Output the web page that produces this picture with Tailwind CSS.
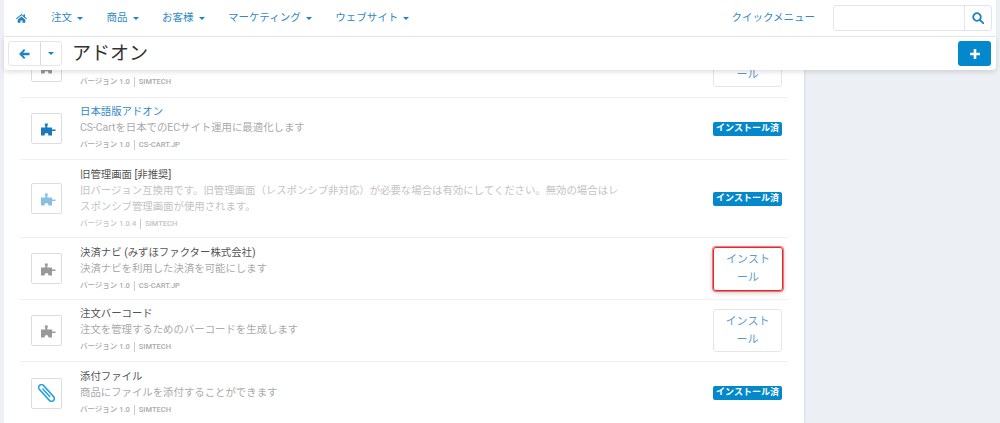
<!DOCTYPE html>
<html lang="ja">
<head>
  <meta charset="UTF-8" />
  <script src="https://cdn.jsdelivr.net/npm/@tailwindcss/browser@4"></script>
  <title>アドオン</title>
</head>
<body class="h-[423px] overflow-hidden bg-[#ecf0f4] font-['Roboto','Noto_Sans_CJK_JP',sans-serif]">
  <svg class="hidden">
    <symbol id="puzzle" viewBox="0 0 20 16">
      <path d="M7.800 2.500h3v1.800l-.5.500V6.500h4.700v2h3.500V10H15v4.500h-3.700v-1.200l-.6-1H8.300l-.6 1v1.200H4V6.500h4.300V4.800l-.5-.5z" fill="currentColor"/>
    </symbol>
  </svg>

  <!-- top bars lie over the scrolled list -->
  <header class="absolute left-[4px] top-0 z-20 w-[992px]">
    <nav class="flex h-[37px] items-center border-b border-[#e8ebee] bg-white pl-[12px] pr-[4px] text-[10.500px] text-[#2f8ac6]">
      <svg class="h-[10px] w-[11px]" viewBox="0 0 16 14"><path d="M8 1 0 7.800l1 1.100L8 3l7 5.900 1-1.100-3-2.500V1.500h-2v2.100zM2.500 9.500V14h4v-3.500h3V14h4V9.500L8 4.800z" fill="#1b82c4"/></svg>
      <ul class="ml-[24px] flex gap-[23.500px]">
        <li class="flex items-center gap-[5px]">注文 <i class="h-0 w-0 border-x-[3px] border-t-[3px] border-x-transparent border-t-[#1b82c4]"></i></li>
        <li class="flex items-center gap-[5px]">商品 <i class="h-0 w-0 border-x-[3px] border-t-[3px] border-x-transparent border-t-[#1b82c4]"></i></li>
        <li class="flex items-center gap-[5px]">お客様 <i class="h-0 w-0 border-x-[3px] border-t-[3px] border-x-transparent border-t-[#1b82c4]"></i></li>
        <li class="flex items-center gap-[5px]">マーケティング <i class="h-0 w-0 border-x-[3px] border-t-[3px] border-x-transparent border-t-[#1b82c4]"></i></li>
        <li class="flex items-center gap-[5px]">ウェブサイト <i class="h-0 w-0 border-x-[3px] border-t-[3px] border-x-transparent border-t-[#1b82c4]"></i></li>
      </ul>
      <span class="ml-auto mr-[18px]">クイックメニュー</span>
      <div class="flex h-[26px] w-[159px] rounded-[3px] border border-[#e2e6ea]">
        <div class="flex-1"></div>
        <div class="flex w-[27px] items-center justify-center border-l border-[#e2e6ea]">
          <svg class="h-[12px] w-[12px]" viewBox="0 0 12 12" fill="none" stroke="#1b82c4" stroke-width="1.800"><circle cx="5" cy="5" r="3.800"/><path d="m8 8 3.200 3.200" stroke-linecap="round"/></svg>
        </div>
      </div>
    </nav>
    <div class="flex h-[33px] items-center justify-between rounded-b-[4px] bg-white pl-[4px] pr-[5px] shadow-[0_2px_5px_rgba(0,0,0,0.13)]">
      <div class="flex items-center">
        <div class="flex h-[25px] w-[54px] rounded-[3px] border border-[#e2e6ea]">
          <div class="flex w-[32px] items-center justify-center border-r border-[#d5dade]">
            <svg class="h-[10px] w-[11px]" viewBox="0 0 11 10"><path d="M5 0 0 5l5 5 1.300-1.300L4 6.300h6.500V3.700H4l2.300-2.400z" fill="#1b82c4"/></svg>
          </div>
          <div class="flex flex-1 items-center justify-center"><i class="h-0 w-0 border-x-[3px] border-t-[3px] border-x-transparent border-t-[#1b82c4]"></i></div>
        </div>
        <h1 class="ml-[10px] text-[19px] leading-none text-[#333]">アドオン</h1>
      </div>
      <div class="flex h-[25px] w-[33px] items-center justify-center rounded-[3px] bg-[#0388cc]">
        <svg class="h-[10px] w-[10px]" viewBox="0 0 10 10"><path d="M3.700 0h2.600v3.700H10v2.600H6.300V10H3.700V6.300H0V3.700h3.700z" fill="#fff"/></svg>
      </div>
    </div>
  </header>

  <main class="ml-[4px] h-[423px] w-[800px] overflow-hidden bg-white px-[16px] pt-[36px] shadow-[1px_0_2px_rgba(0,0,0,0.08)]">
    <div class="flex h-[62px] items-center border-b border-[#eef0f2]">
      <div class="ml-[11px] flex h-[31px] w-[31px] items-center justify-center rounded-[2px] border border-[#ddd] text-[#999]"><svg class="h-[16px] w-[20px]"><use href="#puzzle"/></svg></div>
      <div class="ml-[18px] flex-1"><p class="mt-[30px] text-[7.500px] font-medium text-[#aaa]">バージョン 1.0<span class="mx-[4px] inline-block h-[10px] border-l border-[#ccc] align-middle"></span>SIMTECH</p></div>
      <div class="mr-[6px] flex h-[51px] w-[69px] flex-col items-center justify-end self-start rounded-[3px] border border-[#e2e6ea] pb-[3px] text-[11px] text-[#5b9bd5]">ール</div>
    </div>

    <div class="flex h-[62px] items-center border-b border-[#eef0f2]">
      <div class="ml-[11px] flex h-[31px] w-[31px] items-center justify-center rounded-[2px] border border-[#ddd] text-[#1b78bd]"><svg class="h-[16px] w-[20px]"><use href="#puzzle"/></svg></div>
      <div class="ml-[18px] flex-1 pb-[2px]">
        <h3 class="text-[10.400px] leading-[16px] text-[#2f8ac6]">日本語版アドオン</h3>
        <p class="text-[10.400px] leading-[16px] text-[#aaa]">CS-Cartを日本でのECサイト運用に最適化します</p>
        <p class="mt-[2px] text-[7.500px] leading-[13px] font-medium text-[#aaa]">バージョン 1.0<span class="mx-[4px] inline-block h-[10px] border-l border-[#ccc] align-middle"></span>CS-CART.JP</p>
      </div>
      <span class="mr-[6px] flex h-[14px] w-[69px] items-center justify-center whitespace-nowrap rounded-[2px] bg-[#0388cc] text-[9px] font-bold text-white">インストール済</span>
    </div>

    <div class="flex h-[78px] items-center border-b border-[#eef0f2]">
      <div class="ml-[11px] flex h-[31px] w-[31px] items-center justify-center rounded-[2px] border border-[#ddd] text-[#89bfe3]"><svg class="h-[16px] w-[20px]"><use href="#puzzle"/></svg></div>
      <div class="ml-[18px] w-[548px]">
        <h3 class="text-[10.400px] leading-[16px] text-[#555]">旧管理画面 [非推奨]</h3>
        <p class="text-[10.400px] leading-[16px] text-[#c4c4c4]">旧バージョン互換用です。旧管理画面（レスポンシブ非対応）が必要な場合は有効にしてください。無効の場合はレスポンシブ管理画面が使用されます。</p>
        <p class="mt-[2px] text-[7.500px] leading-[13px] font-medium text-[#c4c4c4]">バージョン 1.0.4<span class="mx-[4px] inline-block h-[10px] border-l border-[#ccc] align-middle"></span>SIMTECH</p>
      </div>
      <span class="ml-auto mr-[6px] flex h-[14px] w-[69px] items-center justify-center whitespace-nowrap rounded-[2px] bg-[#0388cc] text-[9px] font-bold text-white">インストール済</span>
    </div>

    <div class="flex h-[62px] items-center border-b border-[#eef0f2]">
      <div class="ml-[11px] flex h-[31px] w-[31px] items-center justify-center rounded-[2px] border border-[#ddd] text-[#999]"><svg class="h-[16px] w-[20px]"><use href="#puzzle"/></svg></div>
      <div class="ml-[18px] flex-1">
        <h3 class="text-[10.400px] leading-[16px] text-[#555]">決済ナビ (みずほファクター株式会社)</h3>
        <p class="text-[10.400px] leading-[16px] text-[#aaa]">決済ナビを利用した決済を可能にします</p>
        <p class="mt-[2px] text-[7.500px] leading-[13px] font-medium text-[#aaa]">バージョン 1.0<span class="mx-[4px] inline-block h-[10px] border-l border-[#ccc] align-middle"></span>CS-CART.JP</p>
      </div>
      <div class="mr-[5px] flex h-[44px] w-[70px] items-center justify-center rounded-[3px] border border-[#f0242c] text-center text-[11px] leading-[18px] text-[#5b9bd5] shadow-[0_0_0_1px_rgba(240,36,44,0.55),0_1px_5px_rgba(0,0,0,0.3)]">インスト<br>ール</div>
    </div>

    <div class="flex h-[62px] items-center border-b border-[#eef0f2]">
      <div class="ml-[11px] flex h-[31px] w-[31px] items-center justify-center rounded-[2px] border border-[#ddd] text-[#999]"><svg class="h-[16px] w-[20px]"><use href="#puzzle"/></svg></div>
      <div class="ml-[18px] flex-1 pb-[2px]">
        <h3 class="text-[10.400px] leading-[16px] text-[#555]">注文バーコード</h3>
        <p class="text-[10.400px] leading-[16px] text-[#aaa]">注文を管理するためのバーコードを生成します</p>
        <p class="mt-[2px] text-[7.500px] leading-[13px] font-medium text-[#aaa]">バージョン 1.0<span class="mx-[4px] inline-block h-[10px] border-l border-[#ccc] align-middle"></span>SIMTECH</p>
      </div>
      <div class="mr-[6px] flex h-[43px] w-[69px] items-center justify-center rounded-[3px] border border-[#e2e6ea] text-center text-[11px] leading-[18px] text-[#5b9bd5]">インスト<br>ール</div>
    </div>

    <div class="flex h-[62px] items-center">
      <div class="ml-[11px] flex h-[31px] w-[31px] items-center justify-center rounded-[2px] border border-[#ddd]">
        <svg class="h-[18px] w-[18px]" viewBox="0 0 18 18" fill="none" stroke="#2ba5dc" stroke-width="1.600" stroke-linecap="round"><path d="M4.900 5 11.700 12.500M5.600 1.600 15.600 12.600A2.800 2.800 0 0 1 11.400 16.400L1.400 5.400A2.800 2.800 0 0 1 5.600 1.600Z"/></svg>
      </div>
      <div class="ml-[18px] flex-1 pb-[2px]">
        <h3 class="text-[10.400px] leading-[16px] text-[#555]">添付ファイル</h3>
        <p class="text-[10.400px] leading-[16px] text-[#aaa]">商品にファイルを添付することができます</p>
        <p class="mt-[2px] text-[7.500px] leading-[13px] font-medium text-[#aaa]">バージョン 1.0<span class="mx-[4px] inline-block h-[10px] border-l border-[#ccc] align-middle"></span>SIMTECH</p>
      </div>
      <span class="mr-[6px] flex h-[14px] w-[69px] items-center justify-center whitespace-nowrap rounded-[2px] bg-[#0388cc] text-[9px] font-bold text-white">インストール済</span>
    </div>
  </main>
</body>
</html>
